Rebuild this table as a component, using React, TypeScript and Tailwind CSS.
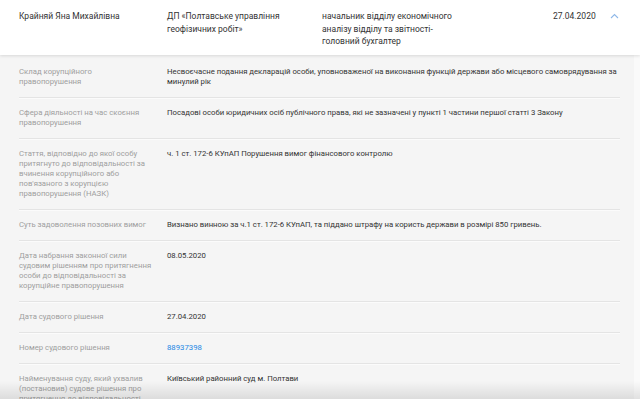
import React from "react";

const rows: { label: string; value: React.ReactNode }[] = [
  {
    label: "Склад корупційного правопорушення",
    value:
      "Несвоєчасне подання декларацій особи, уповноваженої на виконання функцій держави або місцевого самоврядування за минулий рік",
  },
  {
    label: "Сфера діяльності на час скоєння правопорушення",
    value:
      "Посадові особи юридичних осіб публічного права, які не зазначені у пункті 1 частини першої статті 3 Закону",
  },
  {
    label:
      "Стаття, відповідно до якої особу притягнуто до відповідальності за вчинення корупційного або пов'язаного з корупцією правопорушення (НАЗК)",
    value: "ч. 1 ст. 172-6 КУпАП Порушення вимог фінансового контролю",
  },
  {
    label: "Суть задоволення позовних вимог",
    value:
      "Визнано винною за ч.1 ст. 172-6 КУпАП, та піддано штрафу на користь держави в розмірі 850 гривень.",
  },
  {
    label:
      "Дата набрання законної сили судовим рішенням про притягнення особи до відповідальності за корупційне правопорушення",
    value: "08.05.2020",
  },
  { label: "Дата судового рішення", value: "27.04.2020" },
  {
    label: "Номер судового рішення",
    value: <span className="text-[#1e88e5]">88937398</span>,
  },
  {
    label:
      "Найменування суду, який ухвалив (постановив) судове рішення про притягнення до відповідальності",
    value: "Київський районний суд м. Полтави",
  },
];

export default function App() {
  return (
    <div
      className="relative w-[640px] h-[399px] overflow-hidden bg-white"
      style={{ fontFamily: "Roboto, 'Liberation Sans', sans-serif" }}
    >
      <div className="relative z-10 flex items-start h-[55px] bg-white pl-[19px] pt-[10px] text-[8.5px] leading-[12.5px] text-[#333] shadow-[0_1px_3px_rgba(0,0,0,0.12)]">
        <div className="w-[148px] shrink-0">Крайняй Яна Михайлівна</div>
        <div className="w-[155px] shrink-0 pr-[30px]">ДП «Полтавське управління геофізичних робіт»</div>
        <div className="w-[231px] shrink-0 pr-[100px]">
          начальник відділу економічного аналізу відділу та звітності-головний бухгалтер
        </div>
        <div className="w-[52px] shrink-0">27.04.2020</div>
        <div className="ml-[5px] mt-[3px]">
          <svg width="9" height="6" viewBox="0 0 9 6" fill="none">
            <path d="M1 5L4.5 1.5L8 5" stroke="#8fb8e8" strokeWidth="1.1" />
          </svg>
        </div>
      </div>
      <div className="flex h-[344px]">
        <div className="w-[634px] shrink-0 bg-[#f5f5f5] pl-[19px] pr-[14px] pt-[2px] shadow-[1px_0_2px_rgba(0,0,0,0.06)]">
          {rows.map((r, i) => (
            <div
              key={i}
              className="flex border-b border-[#e4e4e4] shadow-[0_1px_0_#fbfbfb] py-[10px] text-[7.75px] leading-[10px]"
            >
              <div className="w-[148px] shrink-0 pr-[14px] text-[#9e9e9e]">{r.label}</div>
              <div className="flex-1 text-[#333]">{r.value}</div>
            </div>
          ))}
        </div>
        <div className="flex-1 bg-[#fafafa]"></div>
      </div>
      <div className="absolute bottom-0 left-0 right-0 h-[18px] bg-gradient-to-b from-transparent to-[rgba(0,0,0,0.1)]"></div>
    </div>
  );
}
